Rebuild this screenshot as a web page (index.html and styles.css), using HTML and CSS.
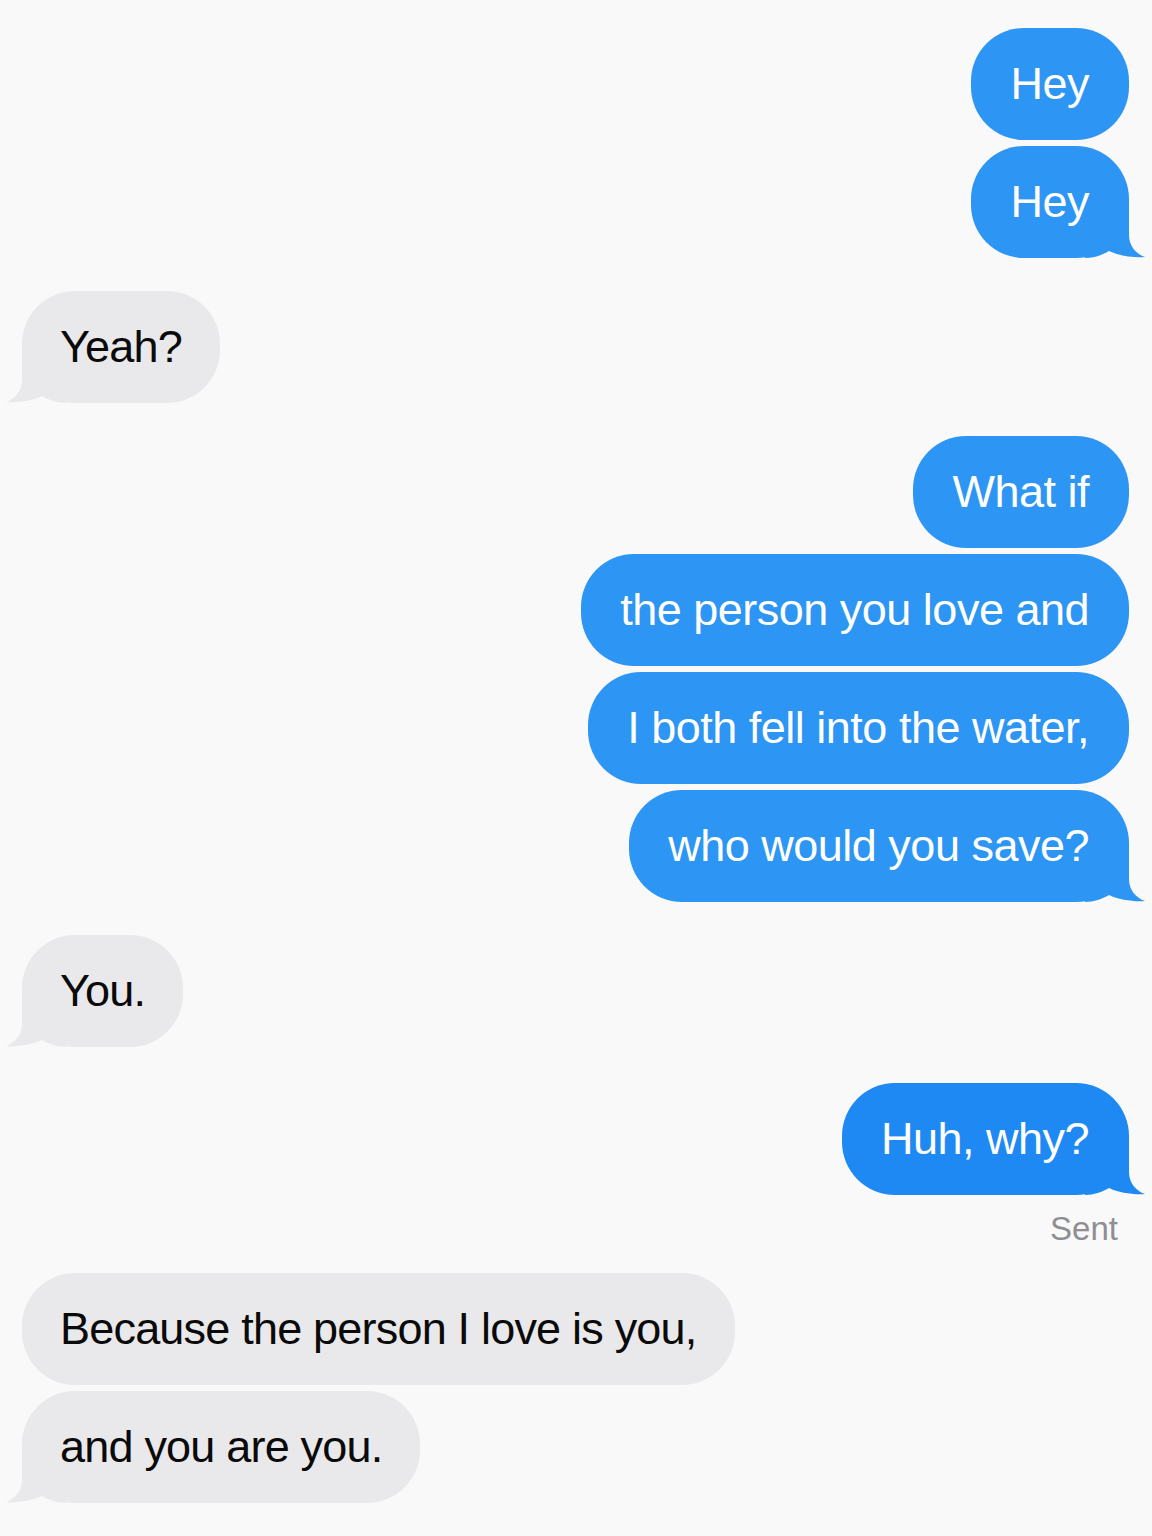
FILE: index.html
```html
<!DOCTYPE html>
<html lang="en">
<head>
<meta charset="utf-8">
<title>Messages</title>
<link rel="stylesheet" href="styles.css">
</head>
<body>
<div class="thread">
  <div class="group out">
    <div class="bubble"><span class="txt">Hey</span></div>
    <div class="bubble"><svg class="tail" viewBox="0 0 60 60" width="60" height="60"><path d="M0 4 H44 V37 C44 48 51 56 60 59 C50 60 34 58 24 53 C17 57 9 60 0 60 Z"/></svg><span class="txt">Hey</span></div>
  </div>
  <div class="group in">
    <div class="bubble"><svg class="tail" viewBox="0 0 60 60" width="60" height="60"><path d="M60 4 H16 V37 C16 48 9 56 0 59 C10 60 26 58 36 53 C43 57 51 60 60 60 Z"/></svg><span class="txt">Yeah?</span></div>
  </div>
  <div class="group out">
    <div class="bubble"><span class="txt">What if</span></div>
    <div class="bubble"><span class="txt">the person you love and</span></div>
    <div class="bubble"><span class="txt">I both fell into the water,</span></div>
    <div class="bubble"><svg class="tail" viewBox="0 0 60 60" width="60" height="60"><path d="M0 4 H44 V37 C44 48 51 56 60 59 C50 60 34 58 24 53 C17 57 9 60 0 60 Z"/></svg><span class="txt">who would you save?</span></div>
  </div>
  <div class="group in">
    <div class="bubble"><svg class="tail" viewBox="0 0 60 60" width="60" height="60"><path d="M60 4 H16 V37 C16 48 9 56 0 59 C10 60 26 58 36 53 C43 57 51 60 60 60 Z"/></svg><span class="txt">You.</span></div>
  </div>
  <div class="group out late">
    <div class="bubble deep"><svg class="tail" viewBox="0 0 60 60" width="60" height="60"><path d="M0 4 H44 V37 C44 48 51 56 60 59 C50 60 34 58 24 53 C17 57 9 60 0 60 Z"/></svg><span class="txt">Huh, why?</span></div>
    <div class="status">Sent</div>
  </div>
  <div class="group in after-status">
    <div class="bubble"><span class="txt">Because the person I love is you,</span></div>
    <div class="bubble"><svg class="tail" viewBox="0 0 60 60" width="60" height="60"><path d="M60 4 H16 V37 C16 48 9 56 0 59 C10 60 26 58 36 53 C43 57 51 60 60 60 Z"/></svg><span class="txt">and you are you.</span></div>
  </div>
</div>
</body>
</html>
```
FILE: styles.css
```css
html, body {
  margin: 0;
  padding: 0;
  background: #f9f9f9;
}
body {
  font-family: "Liberation Sans", Arial, Helvetica, sans-serif;
  width: 1152px;
  min-height: 1536px;
}
.thread {
  display: flex;
  flex-direction: column;
  gap: 33px;
  padding: 28px 23px 0 22px;
}
.group {
  display: flex;
  flex-direction: column;
  gap: 6px;
}
.group.out {
  align-items: flex-end;
}
.group.in {
  align-items: flex-start;
}
.group.late {
  margin-top: 3px;
}
.group.after-status {
  margin-top: -9px;
}
.bubble {
  position: relative;
  box-sizing: border-box;
  height: 112px;
  line-height: 112px;
  padding: 0 40px 0 39px;
  border-radius: 53px;
  font-size: 45px;
  letter-spacing: -0.5px;
  white-space: nowrap;
}
.txt {
  position: relative;
}
.out .bubble {
  background: #2d95f3;
  color: #ffffff;
}
.out .bubble.deep {
  background: #1e89f3;
}
.in .bubble {
  padding: 0 38px 0 38px;
  letter-spacing: -0.8px;
  background: #e9e9eb;
  color: #0a0a0a;
}
.tail {
  position: absolute;
  bottom: 0;
  display: block;
}
.out .tail {
  right: -16px;
  fill: #2d95f3;
}
.out .deep .tail {
  fill: #1e89f3;
}
.in .tail {
  left: -16px;
  fill: #e9e9eb;
}
.status {
  margin-top: 8px;
  margin-right: 11px;
  font-size: 33px;
  line-height: 40px;
  color: #8e8e93;
}
```
